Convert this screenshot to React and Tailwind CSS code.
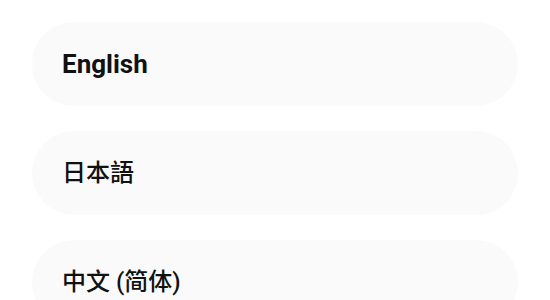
import React from "react";

const languages = [
  { label: "English", cls: "text-[26px] font-bold" },
  { label: "日本語", cls: "text-[24px] font-medium" },
  { label: "中文 (简体)", cls: "text-[24px] font-medium" },
];

export default function App() {
  return (
    <div
      className="w-[550px] h-[300px] overflow-hidden bg-white px-[32px] pt-[22px]"
      style={{ fontFamily: 'Roboto, "Noto Sans CJK SC", "Noto Sans CJK JP", sans-serif' }}
    >
      <div className="flex flex-col gap-[25px]">
        {languages.map((lang) => (
          <div
            key={lang.label}
            className="h-[84px] w-[486px] rounded-[42px] bg-[#fafafa] flex items-center pl-[30px]"
          >
            <span className={lang.cls + " text-[#111] leading-none"}>{lang.label}</span>
          </div>
        ))}
      </div>
    </div>
  );
}
